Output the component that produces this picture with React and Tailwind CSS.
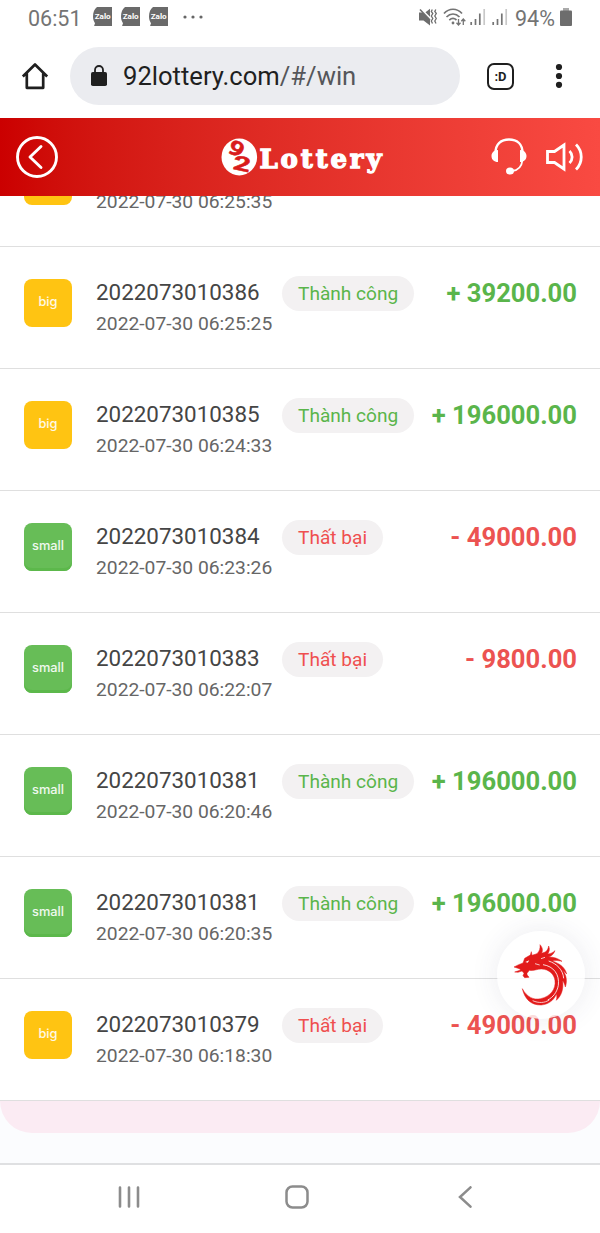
const records = [
    { id: 1, type: 'big', issue: '2022073010387', time: '2022-07-30 06:25:35', win: true, amount: '39200.00' },
    { id: 2, type: 'big', issue: '2022073010386', time: '2022-07-30 06:25:25', win: true, amount: '39200.00' },
    { id: 3, type: 'big', issue: '2022073010385', time: '2022-07-30 06:24:33', win: true, amount: '196000.00' },
    { id: 4, type: 'small', issue: '2022073010384', time: '2022-07-30 06:23:26', win: false, amount: '49000.00' },
    { id: 5, type: 'small', issue: '2022073010383', time: '2022-07-30 06:22:07', win: false, amount: '9800.00' },
    { id: 6, type: 'small', issue: '2022073010381', time: '2022-07-30 06:20:46', win: true, amount: '196000.00' },
    { id: 7, type: 'small', issue: '2022073010381', time: '2022-07-30 06:20:35', win: true, amount: '196000.00' },
    { id: 8, type: 'big', issue: '2022073010379', time: '2022-07-30 06:18:30', win: false, amount: '49000.00' },
]

function ZaloIcon() {
    return (
        <svg width="19" height="19" viewBox="0 0 19 19">
            <path d="M4 0h15v19H5l-4 .2 1-3C.6 14 0 12 0 9.500 0 5 1.500 2 4 0z" fill="#6a6a6a" />
            <text x="9.700" y="12.400" textAnchor="middle" textLength="16" lengthAdjust="spacingAndGlyphs" fontSize="8" fontWeight="700" fill="#fff">Zalo</text>
        </svg>
    )
}

function SignalIcon() {
    return (
        <svg width="16" height="18" viewBox="0 0 16 18" stroke="#747474" strokeWidth="1.700">
            <path d="M1.200 14v3M5.500 11v6M9.800 5.500v11.500" />
            <path d="M14.200 1v16" stroke="#c8c8c8" />
        </svg>
    )
}

function StatusBar() {
    return (
        <div className="flex h-[35px] items-center pl-[28px] pr-[28px] text-[#747474]">
            <span className="w-[65px] pt-px text-[21.500px] leading-[35px]">06:51</span>
            <div className="flex gap-[9px] -mt-[3px]">
                <ZaloIcon />
                <ZaloIcon />
                <ZaloIcon />
            </div>
            <svg className="ml-[15px] -mt-[1px]" width="21" height="4" viewBox="0 0 21 4" fill="#666">
                <circle cx="2" cy="2" r="1.600" />
                <circle cx="10" cy="2" r="1.600" />
                <circle cx="18" cy="2" r="1.600" />
            </svg>
            <div className="ml-auto flex items-center">
                {/* Muet + vibreur */}
                <svg className="-mt-px" width="18" height="18" viewBox="0 0 18 18" fill="#6d6d6d">
                    <path d="M0 4.500h3.500L11 12v5.500L4.500 12.500H0zM6.500 4.300L11 .8v8z" />
                    <path d="M1 1.500L11 12" stroke="#6d6d6d" strokeWidth="1.500" />
                    <path d="M13.300 1.500l-1 2 1.500 2-1.500 2.500 1.500 2.500-1.500 2.500 1.200 2.500M16.800 1.500l-1 2 1.500 2-1.500 2.500 1.500 2.500-1.500 2.500 1.200 2.500" fill="none" stroke="#6d6d6d" strokeWidth="1.300" />
                </svg>
                <svg className="ml-[6px] -mt-px" width="24" height="19" viewBox="0 0 24 19" fill="none" stroke="#747474" strokeWidth="1.700">
                    <path d="M1 5.500C6-.2 14-.2 19 5.500M3.500 9c3.800-4 9.200-4 13 0M6.300 12.200c2.200-2.100 5-2.100 7.200-.2" />
                    <circle cx="10" cy="15" r="1.400" fill="#747474" stroke="none" />
                    <path d="M15.500 11v6M13.500 14.700l2 2.300 2-2.300M20.300 17v-6M18.300 13.300l2-2.300 2 2.300" strokeWidth="1.300" />
                </svg>
                <span className="ml-[3px] -mt-px flex gap-[6px]">
                    <SignalIcon />
                    <SignalIcon />
                </span>
                <span className="ml-[7px] w-[41px] pt-px text-[21.500px] leading-[35px]">94%</span>
                <svg className="ml-[4px] -mt-px" width="12" height="18" viewBox="0 0 12 18" fill="#6d6d6d">
                    <path d="M3 0h6v3H3z" fill="#aaa" />
                    <rect y="2.500" width="12" height="15.500" rx="1" />
                </svg>
            </div>
        </div>
    )
}

function BrowserBar() {
    return (
        <div className="flex h-[83px] items-center pl-[21px] pb-px">
            <svg width="28" height="28" viewBox="0 0 28 28" fill="none" stroke="#1f1f1f" strokeWidth="2.700" strokeLinejoin="round">
                <path d="M1.800 14.500L14 2.500l12.200 12M5.800 11.500v14.300h16.400V11.500" />
            </svg>
            <div className="ml-[21px] flex h-[58px] w-[390px] items-center rounded-full bg-[#ebecf0] pl-[21px]">
                <svg className="-mt-[2px]" width="16" height="21" viewBox="0 0 16 21">
                    <rect y="7" width="16" height="14" rx="1.800" fill="#1f1f1f" />
                    <path d="M4 8V5a4 4 0 0 1 8 0v3" fill="none" stroke="#1f1f1f" strokeWidth="1.800" />
                </svg>
                <span className="ml-[16px] pt-px text-[25.600px] text-[#1f1f1f]">
                    92lottery.com<span className="text-[#55565a]">/#/win</span>
                </span>
            </div>
            <div className="ml-[27px] flex h-[27px] w-[27px] items-center justify-center rounded-[7px] border-[2.500px] border-[#1f1f1f] text-[13px] font-bold leading-none text-[#1f1f1f]">
                <span>:D</span>
            </div>
            <svg className="ml-[41px]" width="8" height="26" viewBox="0 0 8 26" fill="#1f1f1f">
                <circle cx="4" cy="4" r="3.100" />
                <circle cx="4" cy="13" r="3.100" />
                <circle cx="4" cy="21.800" r="3.100" />
            </svg>
        </div>
    )
}

function Header() {
    return (
        <header className="flex h-[78px] shrink-0 items-center bg-linear-to-r from-[#cb0000] to-[#f94a42] px-4">
            <svg width="42" height="42" viewBox="0 0 42 42" fill="none" stroke="#fff" strokeLinecap="round" strokeLinejoin="round">
                <circle cx="21" cy="21" r="19.500" strokeWidth="2.900" />
                <path d="M25 10.500L14 21l11 10.500" strokeWidth="2.900" />
            </svg>
            <svg className="ml-[163px] overflow-visible" width="161" height="38" viewBox="0 0 161 38">
                <ellipse cx="18.300" cy="19" rx="17.800" ry="18.500" fill="#fff" />
                <g fill="#d91b1b" stroke="#d91b1b" strokeWidth=".5" fontWeight="700" fontSize="21" textAnchor="middle">
                    <text transform="translate(11.500 17) rotate(32) scale(1.300 1)">9</text>
                    <text transform="translate(19.500 32.500) rotate(12) scale(1.450 .95)">2</text>
                </g>
                <text x="38.500" y="30" fontFamily="DejaVu Serif" fontSize="26" fontWeight="700" fill="#fff" stroke="#fff" strokeWidth="1.300" textLength="122" lengthAdjust="spacing">Lottery</text>
            </svg>
            <svg className="-mt-[2px] ml-auto" width="36" height="37" viewBox="0 0 36 37" fill="none" stroke="#fff" strokeWidth="2.400">
                <path d="M4.500 15C4.500 6 10 1.500 18 1.500S31.500 6 31.500 15" />
                <path d="M31.500 22c-.8 7-4 10.500-10.500 11" strokeWidth="1.800" />
                <path d="M7 12v12C3 24 .5 21.500 .5 18S3 12.300 7 12zM29 12v12c4 0 6.500-2.500 6.500-6S33 12.300 29 12z" fill="#fff" stroke="none" />
                <ellipse cx="19" cy="33" rx="4" ry="3.500" fill="#fff" stroke="none" />
            </svg>
            <svg className="ml-[19px]" width="38" height="30" viewBox="0 0 38 30" fill="none" stroke="#fff" strokeWidth="2.800">
                <path d="M1.500 9.500h7L18 3v24l-9.500-6.500h-7z" />
                <path d="M23.500 9c3.500 3.500 3.500 8.500 0 12M30 2.500c7 7 7 18 0 25" />
            </svg>
        </header>
    )
}

function RecordRow({ record }) {
    const isBig = record.type === 'big'
    return (
        <div className="flex h-[122px] shrink-0 items-start border-b border-[#dfdfdf] pl-6 pr-[23px] pt-[29px]">
            <div className={`mt-[3px] flex h-12 w-12 items-center justify-center rounded-lg pb-[3px] font-['Inter',sans-serif] text-[12.800px] font-medium text-white/90 ${isBig ? 'bg-[#ffc412]' : 'bg-[#67bd57] shadow-[inset_0_-3px_0_#5cb84b]'}`}>
                {record.type}
            </div>
            <div className="ml-6 w-[186px] whitespace-nowrap">
                <p className="pt-[2px] text-[22.400px] leading-[28px] text-[#454545]">{record.issue}</p>
                <p className="mt-[4px] text-[19.250px] leading-[28px] text-[#666]">{record.time}</p>
            </div>
            <span className={`flex h-[35px] items-center rounded-full bg-[#f3f1f2] px-4 pt-px text-[19.100px] ${record.win ? 'text-[#5ab54b]' : 'text-[#ef4f4f]'}`}>
                {record.win ? 'Thành công' : 'Thất bại'}
            </span>
            <span className={`ml-auto text-[25.600px] font-bold leading-[35px] ${record.win ? 'text-[#5ab54b]' : 'text-[#ec5351]'}`}>
                {record.win ? '+' : '-'} {record.amount}
            </span>
        </div>
    )
}

function DragonButton() {
    return (
        <button className="absolute left-[497px] top-[931px] flex h-[88px] w-[88px] items-center justify-center rounded-full bg-white/80 shadow-[0_0_28px_rgba(60,60,100,0.1)]">
            <svg className="h-[88px] w-[88px]" viewBox="50 153 264 264" fill="#e21b1b">
                {/* Tête et crinière */}
                <path d="M101 261l14-7 13-5 5-14 17-10 3-10 2 11 15-5c8-8 10-16 9-27 8 9 9 17 5 26l11-4c6-5 9-11 10-18 4 9 2 17-3 24 10-1 16-5 22-10-4 10-10 16-20 19 17 0 29 4 41 13-13-3-20-3-29-1 25 9 38 20 43 39l-12-12c12 17 14 34 8 51-2-10-5-15-8-19 3 27-4 45-19 59 2-8 2-13 0-18-9 20-25 30-45 32-31 1-50-18-57-49 13 24 33 35 55 30 30-7 46-29 43-54-2-19-18-34-40-35-14-1-22 7-37 4l-7 9c-1 6 4 8 6 12l-13 1-5-6 3-7-6-7-12 4-10-1 18-6-4-4z" stroke="#e21b1b" strokeWidth="1.500" />
                <path d="M135 246l12-5-5 7z" fill="#fff" />
                {/* Filets blancs le long du corps */}
                <path d="M188 254c32 5 50 29 46 62-4 21-16 36-32 44M205 243c24 8 43 26 45 52" fill="none" stroke="#fff" strokeWidth="2.500" />
                <path d="M164 251l14 4M182 236l12-4M157 362c18 8 36 7 50-2" fill="none" stroke="#fff" strokeWidth="2.200" />
            </svg>
        </button>
    )
}

function NavBar() {
    return (
        <nav className="flex h-[70px] items-center border-t-2 border-[#dfe0e2] bg-white pb-[4px] pl-[118px] text-[#8c8c8c]">
            <svg width="22" height="22" viewBox="0 0 22 22" stroke="currentColor" strokeWidth="2.600" strokeLinecap="round">
                <path d="M2 1.500v19M11 1.500v19M20 1.500v19" />
            </svg>
            <svg className="ml-[145px]" width="24" height="24" viewBox="0 0 24 24" fill="none" stroke="currentColor" strokeWidth="2.500">
                <rect x="1.500" y="1.500" width="21" height="21" rx="6" />
            </svg>
            <svg className="ml-[149px]" width="14" height="22" viewBox="0 0 14 22" fill="none" stroke="currentColor" strokeWidth="2.500" strokeLinecap="round">
                <path d="M12.500 1.300L2 11l10.500 9.700" />
            </svg>
        </nav>
    )
}

export default function App() {
    return (
        <div className="relative flex h-[1233px] w-[600px] flex-col overflow-hidden bg-[#fbfcfe] font-['Roboto',sans-serif]">
            <div className="bg-white">
                <StatusBar />
                <BrowserBar />
            </div>
            <Header />
            {/* La liste est défilée jusqu'en bas, la première ligne passe sous l'en-tête */}
            <main className="flex h-[905px] shrink-0 flex-col justify-end overflow-hidden bg-white">
                {records.map((record) => <RecordRow key={record.id} record={record} />)}
            </main>
            <div className="h-8 shrink-0 rounded-b-[32px] bg-[#fbebf3]" />
            <div className="mt-auto">
                <NavBar />
            </div>
            <DragonButton />
        </div>
    )
}
